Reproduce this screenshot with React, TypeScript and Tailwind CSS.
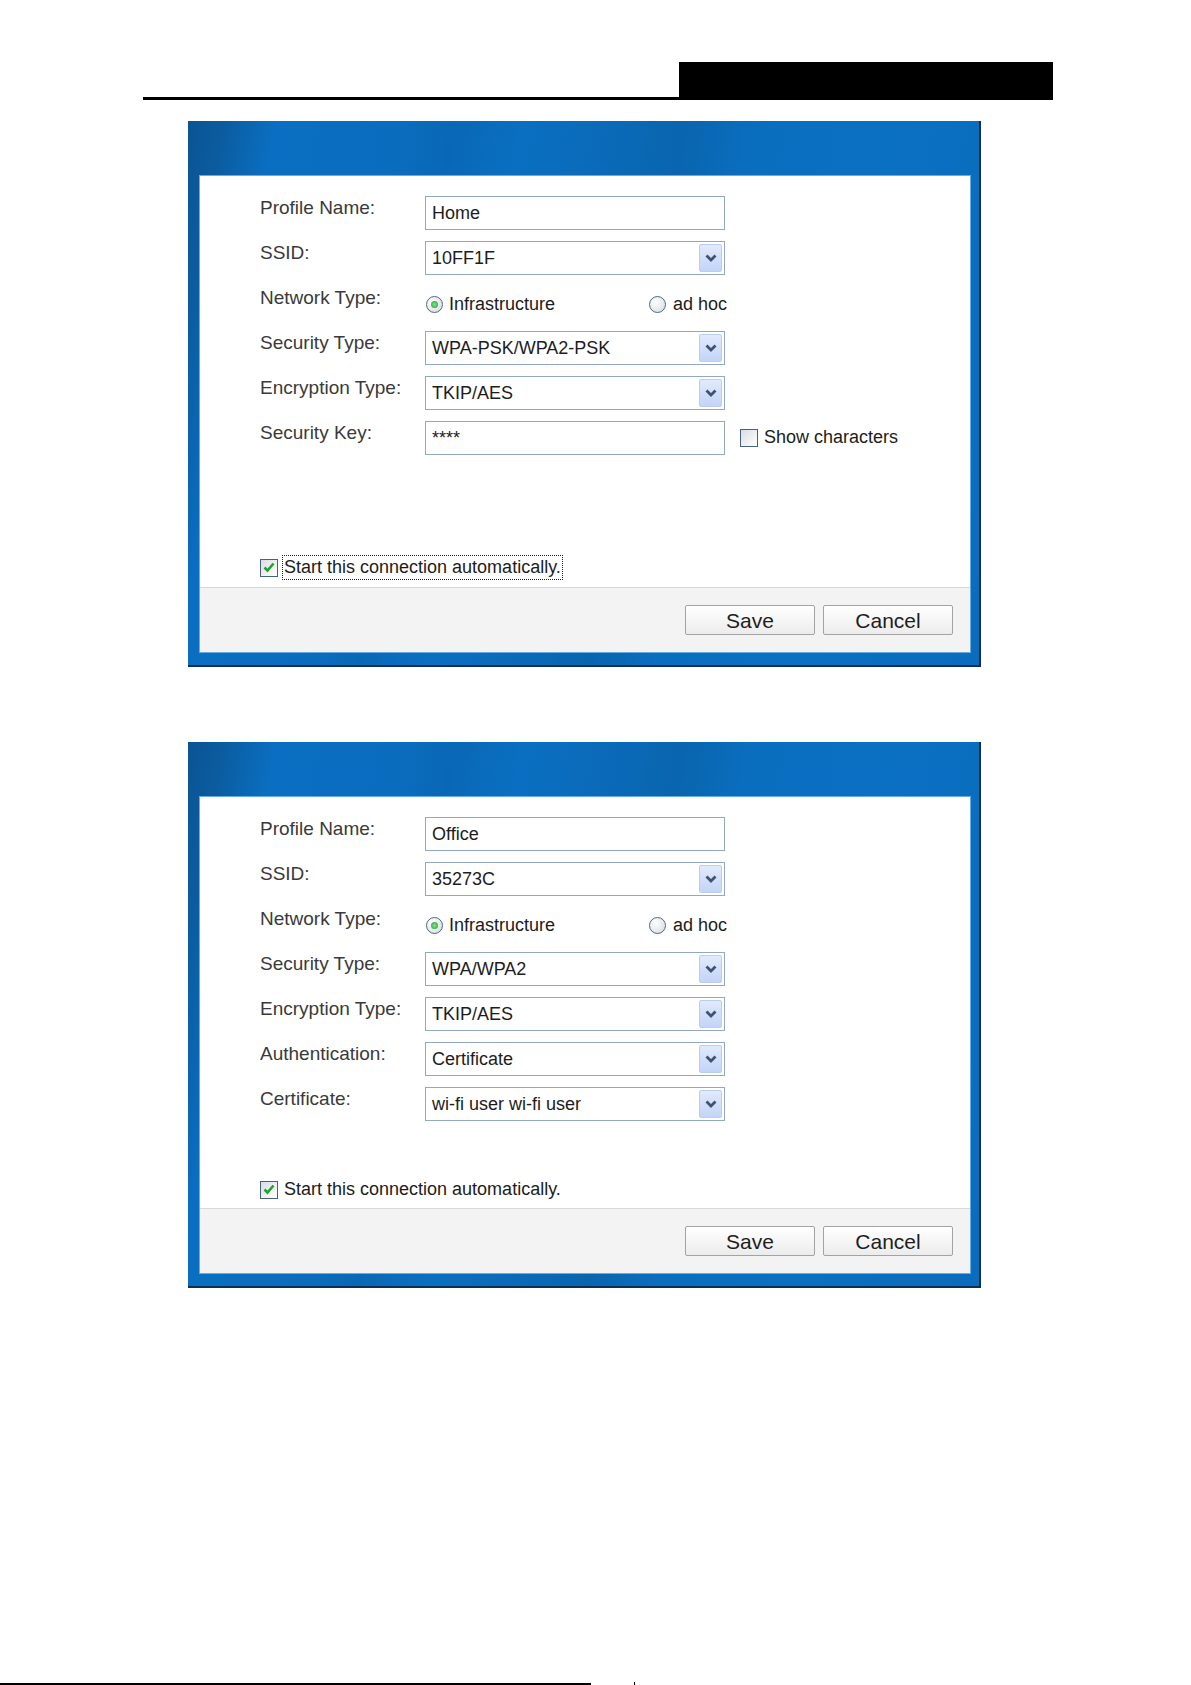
import React from 'react'

type Row =
  | { kind: 'text'; label: string; value: string; extra?: boolean }
  | { kind: 'select'; label: string; value: string }
  | { kind: 'radio'; label: string }

const homeRows: Row[] = [
  { kind: 'text', label: 'Profile Name:', value: 'Home' },
  { kind: 'select', label: 'SSID:', value: '10FF1F' },
  { kind: 'radio', label: 'Network Type:' },
  { kind: 'select', label: 'Security Type:', value: 'WPA-PSK/WPA2-PSK' },
  { kind: 'select', label: 'Encryption Type:', value: 'TKIP/AES' },
  { kind: 'text', label: 'Security Key:', value: '****', extra: true },
]

const officeRows: Row[] = [
  { kind: 'text', label: 'Profile Name:', value: 'Office' },
  { kind: 'select', label: 'SSID:', value: '35273C' },
  { kind: 'radio', label: 'Network Type:' },
  { kind: 'select', label: 'Security Type:', value: 'WPA/WPA2' },
  { kind: 'select', label: 'Encryption Type:', value: 'TKIP/AES' },
  { kind: 'select', label: 'Authentication:', value: 'Certificate' },
  { kind: 'select', label: 'Certificate:', value: 'wi-fi user wi-fi user' },
]

function Checkbox({ checked }: { checked?: boolean }) {
  return (
    <span className="w-[18px] h-[18px] shrink-0 border border-[#48617f] bg-[linear-gradient(135deg,#d9dde2,#ffffff)] flex items-center justify-center">
      {checked && (
        <svg width="12" height="11" viewBox="0 0 12 11">
          <path d="M1.5 5.5 L4.5 8.5 L10.5 1.5" fill="none" stroke="#21a32e" strokeWidth="2.6" />
        </svg>
      )}
    </span>
  )
}

function Radio({ on }: { on?: boolean }) {
  return (
    <span className="w-[17px] h-[17px] shrink-0 rounded-full border border-[#4d6884] bg-[radial-gradient(circle_at_35%_35%,#ffffff,#d4d8dd)] flex items-center justify-center">
      {on && <span className="w-[7px] h-[7px] rounded-full bg-[radial-gradient(circle,#8be28f,#1d9a2a)]" />}
    </span>
  )
}

function Field({ row }: { row: Row }) {
  if (row.kind === 'radio') {
    return (
      <div className="flex items-center pt-[4px] text-[18px] text-[#1c1c1c]">
        <div className="w-[224px] flex items-center gap-[6px] pl-[1px]">
          <Radio on />
          <span>Infrastructure</span>
        </div>
        <div className="flex items-center gap-[7px]">
          <Radio />
          <span>ad hoc</span>
        </div>
      </div>
    )
  }
  return (
    <div className="flex items-center">
      <div className="w-[300px] h-[34px] border border-[#93a8c3] bg-white flex items-center justify-between pl-[6px] pr-[2px]">
        <span className="text-[18px] text-[#1c1c1c] leading-none">{row.value}</span>
        {row.kind === 'select' && (
          <span className="w-[23px] h-[28px] border border-[#bccdee] bg-[linear-gradient(#e2eafc,#c2d4f8)] rounded-[2px] flex items-center justify-center">
            <svg width="12" height="8" viewBox="0 0 12 8">
              <path d="M1.5 1.5 L6 6 L10.5 1.5" fill="none" stroke="#3f5276" strokeWidth="2.8" />
            </svg>
          </span>
        )}
      </div>
      {row.kind === 'text' && row.extra && (
        <div className="flex items-center gap-[6px] ml-[15px] text-[18px] text-[#1c1c1c]">
          <Checkbox />
          <span>Show characters</span>
        </div>
      )}
    </div>
  )
}

function Dialog({ rows, focused }: { rows: Row[]; focused?: boolean }) {
  return (
    <div className="w-[793px] pt-[54px] pl-[11px] pr-[8px] pb-[12px] border-r-2 border-b-2 border-[#0e2f4f] bg-[linear-gradient(100deg,#0a5494_0%,#0b5c9f_4%,#0a6fc2_10%,#0a6cbd_25%,#0968b6_30%,#0a6fc1_38%,#0a6ab8_48%,#0965ae_56%,#0a6ebf_64%,#0a70c2_80%,#0a6cbc_100%)]">
      <div className="border border-[#68aae3] bg-white">
        <div className="h-[411px] flex flex-col pt-[14px] pl-[60px] pb-[7px]">
          {rows.map((r) => (
            <div key={r.label} className="h-[45px] flex items-center">
              <span className="w-[165px] pb-[8px] text-[19px] text-[#3a3a3a]">{r.label}</span>
              <Field row={r} />
            </div>
          ))}
          <div className="mt-auto flex items-center gap-[4px] text-[18px] text-[#1c1c1c]">
            <Checkbox checked />
            <span className={focused ? 'border border-dotted border-[#222] px-[1px] leading-[23px]' : 'px-[2px] leading-[23px]'}>
              Start this connection automatically.
            </span>
          </div>
        </div>
        <div className="h-[65px] border-t border-[#d8d8d8] bg-[#f3f3f3] flex items-center justify-end gap-[8px] pr-[17px]">
          {['Save', 'Cancel'].map((b) => (
            <button
              key={b}
              className="w-[130px] h-[30px] border border-[#a3a3a3] rounded-[2px] bg-[linear-gradient(#ffffff,#ececec)] text-[21px] text-[#1e1e1e] leading-none"
            >
              {b}
            </button>
          ))}
        </div>
      </div>
    </div>
  )
}

export default function App() {
  return (
    <div className="w-[1191px] h-[1685px] bg-white flex flex-col font-['Liberation_Sans',Arial,sans-serif]">
      <div className="flex items-end pt-[62px] pl-[143px]">
        <div className="w-[536px] h-[3px] bg-black" />
        <div className="w-[374px] h-[38px] bg-black" />
      </div>
      <div className="pl-[188px] pt-[21px]">
        <Dialog rows={homeRows} focused />
      </div>
      <div className="pl-[188px] pt-[75px]">
        <Dialog rows={officeRows} />
      </div>
      <div className="mt-auto flex items-end">
        <div className="w-[591px] h-[2px] bg-black" />
        <div className="ml-[43px] w-[1px] h-[3px] bg-black" />
      </div>
    </div>
  )
}
